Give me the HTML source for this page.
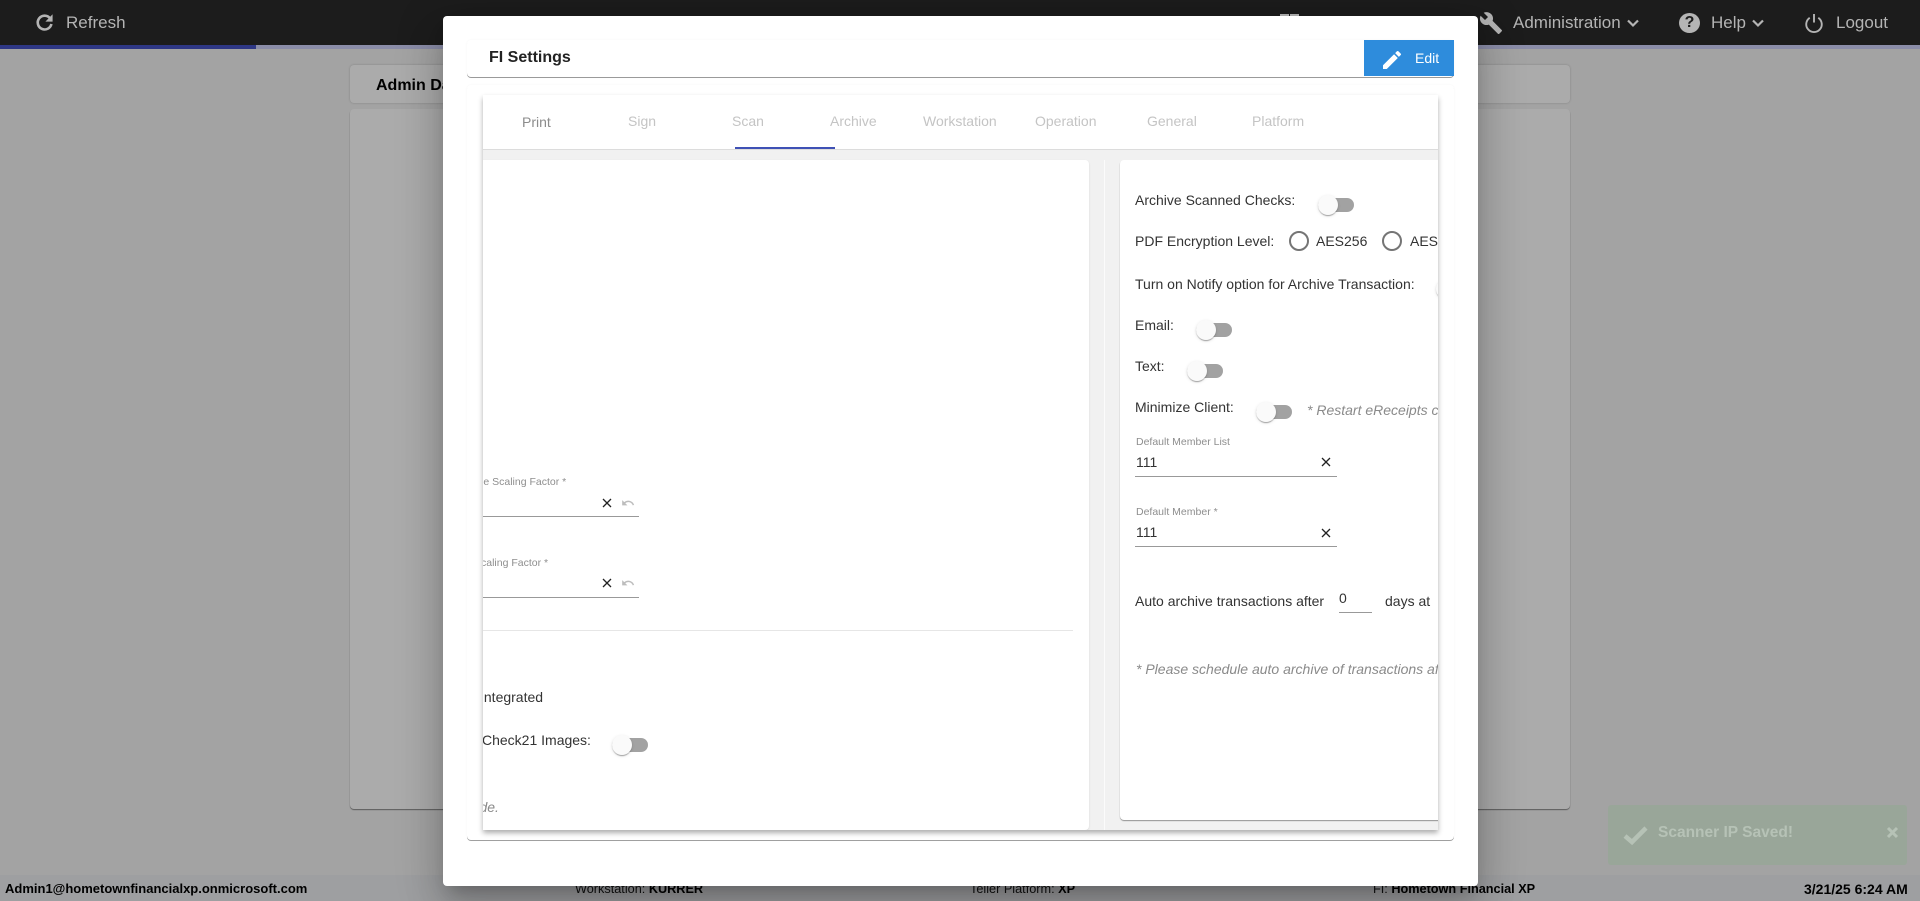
<!DOCTYPE html>
<html lang="en"><head><meta charset="utf-8"><title>FI Settings</title>
<style>
*{box-sizing:border-box}
html,body{margin:0;padding:0;width:1920px;height:901px;overflow:hidden;background:#a3a3a3;font-family:"Liberation Sans",Arial,sans-serif}
.a{position:absolute}
.t{position:absolute;white-space:nowrap;line-height:20px;height:20px;font-size:14px;color:#333}
.hd{color:#b4b4b4;font-size:17px}
.tab{font-size:14px;color:#c4c4c4}
.lb{font-size:10.5px;color:#8e8e8e}
.it{font-style:italic;color:#8a8a8a}
.tr{position:absolute;width:36px;height:14px;border-radius:7px;background:#a2a2a2}
.th{position:absolute;width:20px;height:20px;border-radius:50%;background:#fafafa;box-shadow:0 2px 1px -1px rgba(0,0,0,.2),0 1px 1px rgba(0,0,0,.14),0 1px 3px rgba(0,0,0,.12)}
.rd{position:absolute;width:20px;height:20px;border-radius:50%;border:2px solid #757575}
.ul{position:absolute;height:1px;background:#999}
svg{position:absolute;overflow:visible}
.ft{position:absolute;white-space:nowrap;font-size:12.7px;line-height:20px;height:20px;top:879px;color:#111}
.ft b{color:#000}
</style></head><body>

<!-- page -->
<div class="a" style="left:350px;top:65px;width:1220px;height:38px;background:#ababab;border-radius:4px;box-shadow:0 0 2px rgba(0,0,0,.2)"></div>
<div class="t" style="left:376px;top:76px;font-size:16px;font-weight:bold;color:#000">Admin Dashboard</div>
<div class="a" style="left:350px;top:109px;width:1220px;height:700px;background:#ababab;border-radius:4px;box-shadow:0 1px 1px rgba(0,0,0,.45)"></div>

<!-- header -->
<div class="a" style="left:0;top:0;width:1920px;height:45px;background:#1c1c1c"></div>
<div class="a" style="left:0;top:45px;width:1920px;height:4px;background:#8b8da8"></div>
<div class="a" style="left:0;top:45px;width:256px;height:4px;background:#2e3785"></div>
<svg style="left:36px;top:14px" width="17" height="17" viewBox="0 0 17 17"><path d="M14 4.2A6.9 6.9 0 1 0 15.4 10" fill="none" stroke="#b4b4b4" stroke-width="2.6"/><path d="M16.6 .3V7.6H9.4Z" fill="#b4b4b4"/></svg>
<div class="t hd" style="left:66px;top:13px">Refresh</div>
<div class="a" style="left:1280px;top:14px;width:9px;height:2px;background:#b4b4b4"></div>
<div class="a" style="left:1290px;top:14px;width:9px;height:2px;background:#b4b4b4"></div>
<svg style="left:1479px;top:11px" width="24" height="24" viewBox="0 0 24 24"><path d="M22.7 19l-9.1-9.1c.9-2.3.4-5-1.5-6.9-2-2-5-2.4-7.4-1.3L9 6 6 9 1.6 4.7C.4 7.1.9 10.1 2.9 12.1c1.9 1.9 4.6 2.4 6.9 1.5l9.1 9.1c.4.4 1 .4 1.4 0l2.3-2.3c.5-.4.5-1.1.1-1.4z" fill="#b4b4b4"/></svg>
<div class="t hd" style="left:1513px;top:13px">Administration</div>
<svg style="left:1627px;top:19px" width="12" height="8" viewBox="0 0 12 8"><path d="M1 1.5l5 5 5-5" fill="none" stroke="#b4b4b4" stroke-width="2.2"/></svg>
<div class="a" style="left:1679px;top:13px;width:21px;height:20px;border-radius:50%;background:#b4b4b4"></div>
<div class="t" style="left:1679px;top:13px;width:21px;text-align:center;font-size:16px;font-weight:bold;color:#1c1c1c">?</div>
<div class="t hd" style="left:1711px;top:13px">Help</div>
<svg style="left:1752px;top:19px" width="12" height="8" viewBox="0 0 12 8"><path d="M1 1.5l5 5 5-5" fill="none" stroke="#b4b4b4" stroke-width="2.2"/></svg>
<svg style="left:1804px;top:14px" width="20" height="18" viewBox="0 0 20 19"><path d="M5.5 4A8.2 8.2 0 1 0 14.5 4" fill="none" stroke="#b4b4b4" stroke-width="2"/><path d="M10 0V9" stroke="#b4b4b4" stroke-width="2"/></svg>
<div class="t hd" style="left:1836px;top:13px">Logout</div>

<!-- footer -->
<div class="a" style="left:0;top:875px;width:1920px;height:26px;background:#9e9fa1"></div>
<div class="ft" style="left:5px;font-size:13px"><b>Admin1@hometownfinancialxp.onmicrosoft.com</b></div>
<div class="ft" style="left:575px">Workstation: <b>KURRER</b></div>
<div class="ft" style="left:970px">Teller Platform: <b>XP</b></div>
<div class="ft" style="left:1373px">FI: <b>Hometown Financial XP</b></div>
<div class="ft" style="left:1804px;font-size:14px"><b>3/21/25 6:24 AM</b></div>

<!-- toast -->
<div class="a" style="left:1608px;top:805px;width:299px;height:60px;background:#99a699;border-radius:3px"></div>
<svg style="left:1623px;top:826px" width="25" height="19" viewBox="0 0 25 19"><path d="M2 10l7 6L23 2" fill="none" stroke="#b6c2b6" stroke-width="4.5"/></svg>
<div class="t" style="left:1658px;top:823px;font-size:15.5px;font-weight:bold;color:#b6c2b6">Scanner IP Saved!</div>
<svg style="left:1887px;top:827px" width="11" height="11" viewBox="0 0 11 11"><path d="M1 1l9 9M10 1l-9 9" stroke="#b6c2b6" stroke-width="3"/></svg>

<!-- modal -->
<div class="a" style="left:443px;top:16px;width:1035px;height:870px;background:#fff;border-radius:4px;box-shadow:0 11px 15px -7px rgba(0,0,0,.2),0 24px 38px 3px rgba(0,0,0,.14),0 9px 46px 8px rgba(0,0,0,.12)"></div>

<!-- title card -->
<div class="a" style="left:467px;top:40px;width:987px;height:37px;background:#fff;border-radius:4px;box-shadow:0 1px 0 #9a9a9a,0 0 2px rgba(0,0,0,.04)"></div>
<div class="t" style="left:489px;top:48px;font-size:16px;font-weight:bold;color:#222">FI Settings</div>
<div class="a" style="left:1364px;top:40px;width:90px;height:36px;background:#2e8cdc"></div>
<svg style="left:1380px;top:48px" width="24" height="24" viewBox="0 0 24 24"><path d="M3 17.25V21h3.75L17.81 9.94l-3.75-3.75L3 17.25zM20.71 7.04a1 1 0 0 0 0-1.41l-2.34-2.34a1 1 0 0 0-1.41 0l-1.83 1.83 3.75 3.75 1.83-1.83z" fill="#fff"/></svg>
<div class="t" style="left:1415px;top:48px;color:#fff">Edit</div>

<!-- body card -->
<div class="a" style="left:467px;top:85px;width:987px;height:755px;background:#fff;border-radius:4px;box-shadow:0 1px 0 #a0a0a0,0 0 2px rgba(0,0,0,.04)"></div>

<!-- panel -->
<div class="a" style="left:483px;top:95px;width:955px;height:735px;background:#f1f1f1;box-shadow:0 3px 5px rgba(0,0,0,.32)"></div>
<div class="a" style="left:483px;top:95px;width:955px;height:735px;overflow:hidden">
<div class="a" style="left:-483px;top:-95px;width:1920px;height:901px">

  <div class="a" style="left:483px;top:95px;width:955px;height:54px;background:#fff"></div>
  <div class="a" style="left:483px;top:149px;width:955px;height:1px;background:#dcdcdc"></div>
  <div class="t tab" style="left:522px;top:112px;color:#8c8c8c">Print</div>
  <div class="t tab" style="left:628px;top:111px">Sign</div>
  <div class="t tab" style="left:732px;top:111px">Scan</div>
  <div class="t tab" style="left:830px;top:111px">Archive</div>
  <div class="t tab" style="left:923px;top:111px">Workstation</div>
  <div class="t tab" style="left:1035px;top:111px">Operation</div>
  <div class="t tab" style="left:1147px;top:111px">General</div>
  <div class="t tab" style="left:1252px;top:111px">Platform</div>
  <div class="a" style="left:735px;top:147px;width:100px;height:2px;background:#3f51b5"></div>

  <!-- left card -->
  <div class="a" style="left:470px;top:160px;width:619px;height:670px;background:#fff;border-radius:4px;box-shadow:0 1px 2px rgba(0,0,0,.1)"></div>
  <div class="t lb" style="left:460px;top:472px">Image Scaling Factor *</div>
  <svg style="left:602px;top:498px" width="10" height="10" viewBox="0 0 10 10"><path d="M1 1l8 8M9 1l-8 8" stroke="#222" stroke-width="1.3"/></svg>
  <svg style="left:621px;top:496px" width="14" height="14" viewBox="0 0 24 24"><path d="M12.5 8c-2.65 0-5.05.99-6.9 2.6L2 7v9h9l-3.62-3.62c1.39-1.16 3.16-1.88 5.12-1.88 3.54 0 6.55 2.31 7.6 5.5l2.37-.78C21.08 11.03 17.15 8 12.5 8z" fill="#bdbdbd"/></svg>
  <div class="ul" style="left:470px;top:516px;width:169px"></div>
  <div class="t lb" style="left:474px;top:553px">Scaling Factor *</div>
  <svg style="left:602px;top:578px" width="10" height="10" viewBox="0 0 10 10"><path d="M1 1l8 8M9 1l-8 8" stroke="#222" stroke-width="1.3"/></svg>
  <svg style="left:621px;top:576px" width="14" height="14" viewBox="0 0 24 24"><path d="M12.5 8c-2.65 0-5.05.99-6.9 2.6L2 7v9h9l-3.62-3.62c1.39-1.16 3.16-1.88 5.12-1.88 3.54 0 6.55 2.31 7.6 5.5l2.37-.78C21.08 11.03 17.15 8 12.5 8z" fill="#bdbdbd"/></svg>
  <div class="ul" style="left:470px;top:597px;width:169px"></div>
  <div class="a" style="left:470px;top:630px;width:603px;height:1px;background:#e6e6e6"></div>
  <div class="t" style="left:480px;top:687px">Integrated</div>
  <div class="t" style="left:482px;top:730px">Check21 Images:</div>
  <div class="tr" style="left:612px;top:738px"></div><div class="th" style="left:612px;top:735px"></div>
  <div class="t it" style="left:460px;top:797px">Mode.</div>

  <!-- gutter -->
  <div class="a" style="left:1104px;top:160px;width:1px;height:670px;background:#fbfbfb"></div>

  <!-- right card -->
  <div class="a" style="left:1120px;top:160px;width:340px;height:660px;background:#fff;border-radius:4px;box-shadow:0 1px 1px rgba(0,0,0,.4)"></div>

  <div class="t" style="left:1135px;top:190px">Archive Scanned Checks:</div>
  <div class="tr" style="left:1318px;top:198px"></div><div class="th" style="left:1318px;top:195px"></div>

  <div class="t" style="left:1135px;top:231px">PDF Encryption Level:</div>
  <div class="rd" style="left:1289px;top:231px"></div>
  <div class="t" style="left:1316px;top:231px">AES256</div>
  <div class="rd" style="left:1382px;top:231px"></div>
  <div class="t" style="left:1410px;top:231px">AES128</div>

  <div class="t" style="left:1135px;top:274px">Turn on Notify option for Archive Transaction:</div>
  <div class="th" style="left:1436px;top:279px"></div>

  <div class="t" style="left:1135px;top:315px">Email:</div>
  <div class="tr" style="left:1196px;top:323px"></div><div class="th" style="left:1196px;top:320px"></div>

  <div class="t" style="left:1135px;top:356px">Text:</div>
  <div class="tr" style="left:1187px;top:364px"></div><div class="th" style="left:1187px;top:361px"></div>

  <div class="t" style="left:1135px;top:397px">Minimize Client:</div>
  <div class="tr" style="left:1256px;top:405px"></div><div class="th" style="left:1256px;top:402px"></div>
  <div class="t it" style="left:1307px;top:400px">* Restart eReceipts client</div>

  <div class="t lb" style="left:1136px;top:432px">Default Member List</div>
  <div class="t" style="left:1136px;top:452px">111</div>
  <svg style="left:1321px;top:457px" width="10" height="10" viewBox="0 0 10 10"><path d="M1 1l8 8M9 1l-8 8" stroke="#222" stroke-width="1.3"/></svg>
  <div class="ul" style="left:1135px;top:476px;width:202px"></div>

  <div class="t lb" style="left:1136px;top:502px">Default Member *</div>
  <div class="t" style="left:1136px;top:522px">111</div>
  <svg style="left:1321px;top:528px" width="10" height="10" viewBox="0 0 10 10"><path d="M1 1l8 8M9 1l-8 8" stroke="#222" stroke-width="1.3"/></svg>
  <div class="ul" style="left:1135px;top:546px;width:202px"></div>

  <div class="t" style="left:1135px;top:591px">Auto archive transactions after</div>
  <div class="t" style="left:1339px;top:588px">0</div>
  <div class="ul" style="left:1339px;top:612px;width:33px"></div>
  <div class="t" style="left:1385px;top:591px">days at</div>

  <div class="t it" style="left:1136px;top:659px">* Please schedule auto archive of transactions after hours</div>
</div>
</div>
</body></html>
